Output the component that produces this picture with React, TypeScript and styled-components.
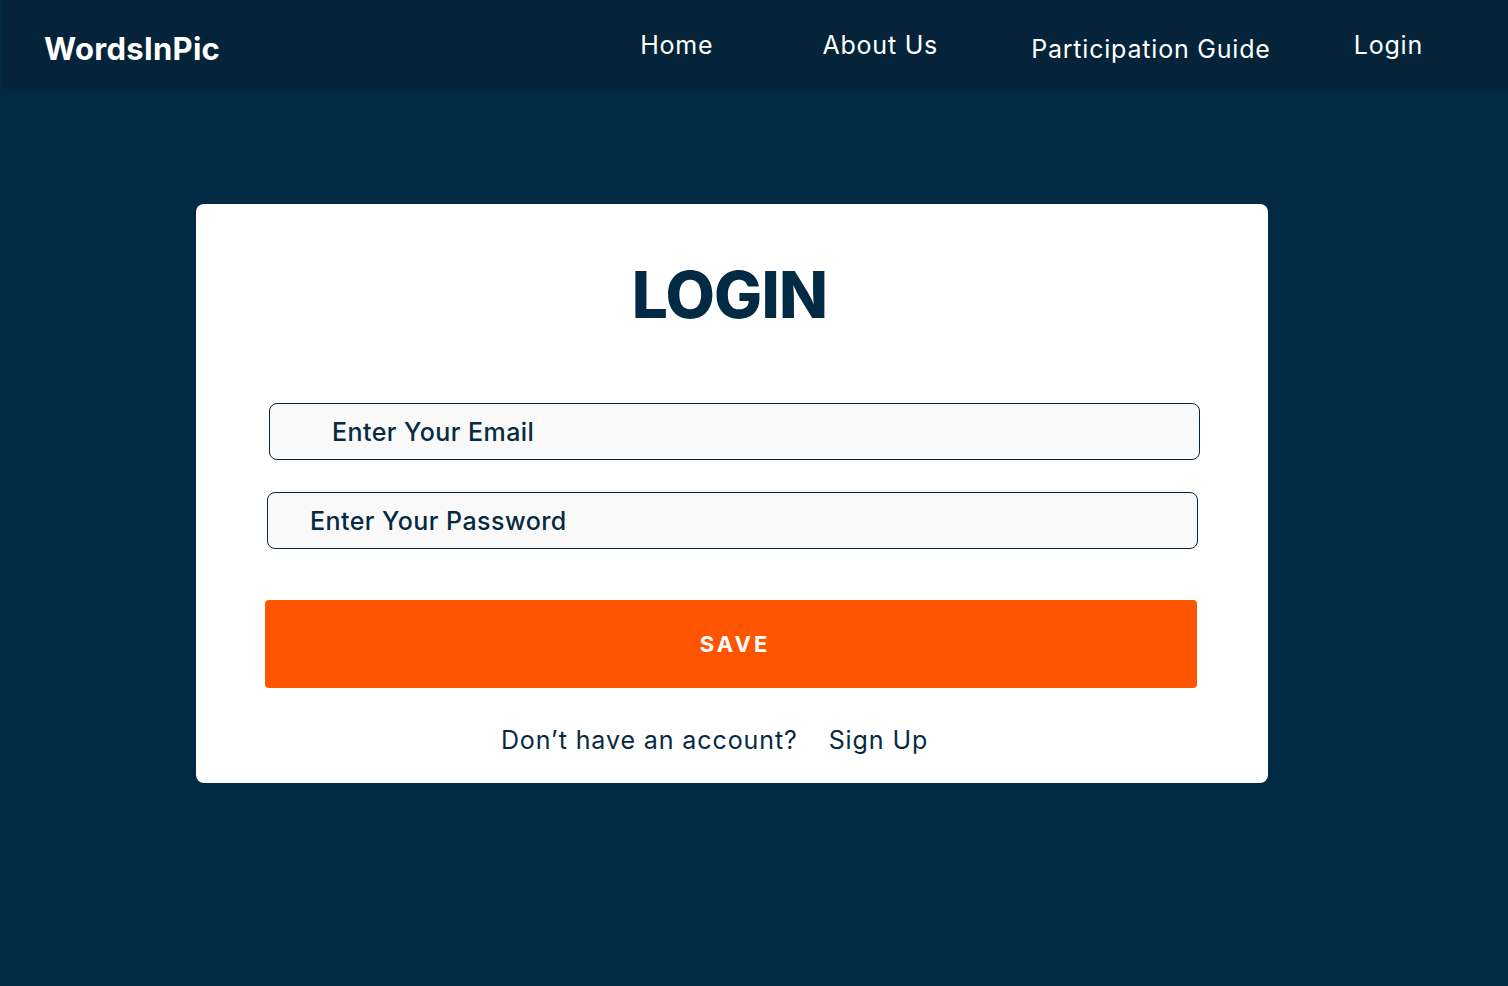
import React from "react";
import styled, { createGlobalStyle } from "styled-components";

const Global = createGlobalStyle`
  html, body { margin: 0; padding: 0; background: #032a45; }
  body { font-family: "Inter", "Liberation Sans", sans-serif; min-height: 986px; }
  * { box-sizing: border-box; }
`;

const Page = styled.div`
  min-height: 986px;
  background: #032a45;
  display: flex;
  flex-direction: column;
`;

const Header = styled.header`
  height: 89px;
  margin-left: 2px;
  background: #05243a;
  display: flex;
  align-items: center;
  padding-left: 42px;
`;

const Logo = styled.div`
  color: #ffffff;
  font-size: 31px;
  font-weight: 700;
  letter-spacing: 0.3px;
  margin-top: 8px;
`;

const Nav = styled.nav`
  display: flex;
  align-items: center;
  margin-left: auto;
  padding-right: 85px;
`;

const NavLink = styled.a<{ $ml: number; $dy: number }>`
  color: #ffffff;
  font-size: 25px;
  font-weight: 400;
  letter-spacing: 0.8px;
  text-decoration: none;
  margin-left: ${(p) => p.$ml}px;
  transform: translateY(${(p) => p.$dy}px);
`;

const Card = styled.main`
  margin: 115px 0 0 196px;
  width: 1072px;
  height: 579px;
  background: #ffffff;
  border-radius: 8px;
  display: flex;
  flex-direction: column;
  padding: 0 70px 0 69px;
`;

const Title = styled.h1`
  margin: 55px 0 0;
  text-align: center;
  color: #032a45;
  font-size: 64px;
  font-weight: 800;
  line-height: 72px;
  letter-spacing: -0.8px;
  margin-right: 4px;
`;

const Field = styled.div<{ $shift: number; $mt: number; $pad: number }>`
  margin-top: ${(p) => p.$mt}px;
  margin-left: ${(p) => p.$shift}px;
  width: 931px;
  height: 57px;
  border: 1px solid #0a2439;
  border-radius: 8px;
  background: #f9f9f9;
  display: flex;
  align-items: center;
  padding-left: ${(p) => p.$pad}px;
  color: #062a42;
  font-size: 25px;
  font-weight: 500;
  letter-spacing: 0.45px;
`;

const SaveButton = styled.button`
  margin-top: 51px;
  margin-left: 0;
  width: 932px;
  height: 88px;
  border: none;
  border-radius: 4px;
  background: #ff5500;
  color: #ffffff;
  font-family: inherit;
  font-size: 22px;
  font-weight: 700;
  letter-spacing: 3px;
  padding-left: 14px;
  cursor: pointer;
`;

const Footer = styled.div`
  margin-top: 37px;
  display: flex;
  justify-content: center;
  gap: 31px;
  color: #062a42;
  font-size: 25px;
  font-weight: 400;
  letter-spacing: 0.9px;
  margin-left: -34px;
`;

export default function App() {
  return (
    <>
      <Global />
      <Page>
        <Header>
          <Logo>WordsInPic</Logo>
          <Nav>
            <NavLink $ml={0} $dy={0}>Home</NavLink>
            <NavLink $ml={109} $dy={0}>About Us</NavLink>
            <NavLink $ml={93} $dy={4}>Participation Guide</NavLink>
            <NavLink $ml={83} $dy={0}>Login</NavLink>
          </Nav>
        </Header>
        <Card>
          <Title>LOGIN</Title>
          <Field $shift={4} $mt={72} $pad={62}>Enter Your Email</Field>
          <Field $shift={2} $mt={32} $pad={42}>Enter Your Password</Field>
          <SaveButton>SAVE</SaveButton>
          <Footer>
            <span>Don’t have an account?</span>
            <span>Sign Up</span>
          </Footer>
        </Card>
      </Page>
    </>
  );
}
